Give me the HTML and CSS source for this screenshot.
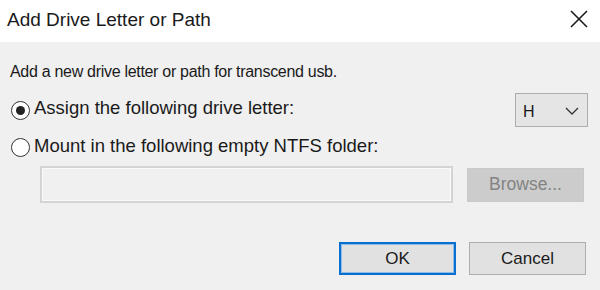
FILE: index.html
```html
<!DOCTYPE html>
<html>
<head>
<meta charset="utf-8">
<link rel="stylesheet" href="styles.css">
</head>
<body>
<div class="dialog">
  <div class="titlebar">
    <span class="title">Add Drive Letter or Path</span>
    <svg class="close" width="18" height="18" viewBox="0 0 18 18"><path d="M1 1 L17 17 M17 1 L1 17" stroke="#1a1a1a" stroke-width="1.6" fill="none"/></svg>
  </div>
  <div class="content">
    <div class="intro">Add a new drive letter or path for transcend usb.</div>
    <div class="row row-assign">
      <span class="radio checked"></span>
      <span class="label">Assign the following drive letter:</span>
      <div class="select">
        <span class="select-value">H</span>
        <svg class="chev" width="14" height="8" viewBox="0 0 14 8"><path d="M1 1 L7 7 L13 1" stroke="#333" stroke-width="1.3" fill="none"/></svg>
      </div>
    </div>
    <div class="row row-mount">
      <span class="radio"></span>
      <span class="label">Mount in the following empty NTFS folder:</span>
    </div>
    <div class="row row-path">
      <div class="textbox"></div>
      <div class="btn disabled">Browse...</div>
    </div>
    <div class="actions">
      <div class="btn default">OK</div>
      <div class="btn">Cancel</div>
    </div>
  </div>
</div>
</body>
</html>
```
FILE: styles.css
```css
html, body {
  margin: 0;
  padding: 0;
}
body {
  width: 600px;
  height: 290px;
  background: #f0f0f0;
  font-family: "Liberation Sans", Arial, sans-serif;
  color: #1a1a1a;
  overflow: hidden;
}
.dialog {
  display: flex;
  flex-direction: column;
  height: 290px;
}
.titlebar {
  height: 42px;
  background: #ffffff;
  display: flex;
  align-items: center;
  justify-content: space-between;
  padding: 0 12px 0 7px;
}
.title {
  font-size: 19px;
  color: #1a1a1a;
  margin-top: -2px;
}
.close {
  margin-top: -4px;
}
.content {
  display: flex;
  flex-direction: column;
  padding: 20px 14px 0 10px;
  font-size: 16px;
}
.intro {
  line-height: 20px;
  letter-spacing: -0.3px;
}
.row {
  display: flex;
  align-items: center;
}
.row-assign {
  margin-top: 11px;
  height: 34px;
}
.row-mount {
  margin-top: 10px;
  height: 20px;
}
.radio {
  width: 17px;
  height: 17px;
  border: 1.5px solid #333;
  border-radius: 50%;
  background: #fff;
  box-sizing: content-box;
  display: flex;
  align-items: center;
  justify-content: center;
  margin-left: 1px;
  flex: none;
}
.radio.checked::after {
  content: "";
  width: 9px;
  height: 9px;
  border-radius: 50%;
  background: #222;
}
.label {
  margin-left: 4px;
  font-size: 18.5px;
  line-height: 20px;
}
.row-assign .label {
  margin-top: -4px;
}
.row-mount .label {
  margin-top: -2px;
}
.select {
  margin-left: auto;
  width: 73px;
  height: 34px;
  border: 1px solid #adadad;
  background: #e5e5e5;
  display: flex;
  align-items: center;
  justify-content: space-between;
  padding: 0 8px 0 7px;
  box-sizing: border-box;
  margin-right: -2px;
  font-size: 16px;
}
.select-value {
  margin-top: 3px;
}
.chev {
  margin-top: 1px;
}
.row-path {
  margin-top: 9px;
  padding-left: 30px;
  gap: 14px;
}
.textbox {
  width: 413px;
  height: 37px;
  box-sizing: border-box;
  border: 2px solid #d4d4d4;
  box-shadow: inset 0 0 0 1px #fafafa;
  background: #f0f0f0;
}
.btn {
  width: 117px;
  height: 33px;
  box-sizing: border-box;
  border: 1px solid #adadad;
  background: #e1e1e1;
  display: flex;
  align-items: center;
  justify-content: center;
  font-size: 17px;
  color: #1a1a1a;
}
.btn.disabled {
  height: 34px;
  border-color: #c8c8c8;
  background: #cccccc;
  color: #838383;
  font-size: 17.5px;
}
.actions {
  display: flex;
  justify-content: flex-end;
  gap: 13px;
  margin-top: 39px;
}
.btn.default {
  border: 2px solid #0a70d0;
  box-shadow: inset 0 0 0 1px #8cbcea;
}
```
